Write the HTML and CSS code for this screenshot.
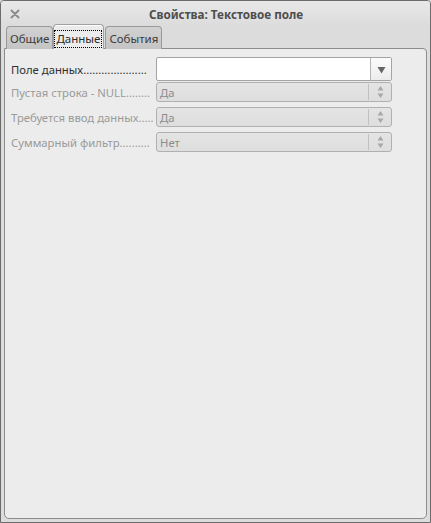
FILE: index.html
```html
<!DOCTYPE html>
<html lang="ru">
<head>
<meta charset="utf-8">
<title>Свойства: Текстовое поле</title>
<link rel="stylesheet" href="styles.css">
</head>
<body>
<div class="window">
  <div class="titlebar">
    <svg class="close" width="10" height="10" viewBox="0 0 10 10"><path d="M1.5 1.5 L8.5 8.5 M8.5 1.5 L1.5 8.5" stroke="#8c8c8c" stroke-width="2" stroke-linecap="round"/></svg>
    <span class="title">Свойства: Текстовое поле</span>
  </div>
  <div class="tabs">
    <div class="tab">Общие</div>
    <div class="tab active"><span class="focus">Данные</span></div>
    <div class="tab last">События</div>
  </div>
  <div class="panel">
    <div class="row first">
      <div class="label">Поле данных.....................</div>
      <div class="combo">
        <div class="combo-text"></div>
        <div class="combo-btn"><svg width="9" height="8" viewBox="0 0 9 8"><path d="M0.5 1 L8.5 1 L4.5 7.5 Z" fill="#666"/></svg></div>
      </div>
    </div>
    <div class="row">
      <div class="label dim">Пустая строка - NULL........</div>
      <div class="select"><span class="val">Да</span><span class="spin"><svg width="7" height="14" viewBox="0 0 7 14"><path d="M3.5 1 L6.5 5.5 L0.5 5.5 Z M0.5 8.5 L6.5 8.5 L3.5 13 Z" fill="#a8a8a8"/></svg></span></div>
    </div>
    <div class="row">
      <div class="label dim">Требуется ввод данных.....</div>
      <div class="select"><span class="val">Да</span><span class="spin"><svg width="7" height="14" viewBox="0 0 7 14"><path d="M3.5 1 L6.5 5.5 L0.5 5.5 Z M0.5 8.5 L6.5 8.5 L3.5 13 Z" fill="#a8a8a8"/></svg></span></div>
    </div>
    <div class="row">
      <div class="label dim">Суммарный фильтр..........</div>
      <div class="select"><span class="val">Нет</span><span class="spin"><svg width="7" height="14" viewBox="0 0 7 14"><path d="M3.5 1 L6.5 5.5 L0.5 5.5 Z M0.5 8.5 L6.5 8.5 L3.5 13 Z" fill="#a8a8a8"/></svg></span></div>
    </div>
  </div>
</div>
</body>
</html>
```
FILE: styles.css
```css
html, body {
  margin: 0;
  padding: 0;
  background: #dadada;
}
body {
  font-family: "Noto Sans", "Open Sans", sans-serif;
  font-size: 11.3px;
}
.window {
  box-sizing: border-box;
  width: 431px;
  height: 523px;
  border: 1px solid #6b6b6b;
  border-radius: 4px 4px 0 0;
  background: #dcdcdc;
  display: flex;
  flex-direction: column;
}
.titlebar {
  height: 24px;
  flex: none;
  display: flex;
  align-items: center;
  position: relative;
  background: linear-gradient(#e8e8e8, #dcdcdc);
  border-radius: 3px 3px 0 0;
}
.close {
  position: absolute;
  left: 9px;
  top: 8px;
}
.title {
  flex: 1;
  text-align: center;
  padding-left: 21px;
  font-weight: bold;
  color: #4e4e4e;
  font-size: 11.7px;
  margin-top: 2px;
}
.tabs {
  display: flex;
  align-items: flex-end;
  height: 24px;
  flex: none;
  padding-left: 5px;
  position: relative;
  z-index: 1;
  margin-bottom: -1px;
}
.tab {
  box-sizing: border-box;
  height: 23px;
  padding: 2px 3px 0 3px;
  border: 1px solid #9a9a9a;
  border-bottom: none;
  border-radius: 4px 4px 0 0;
  background: linear-gradient(#d2d2d2, #c4c4c4);
  color: #3c3c3c;
  display: flex;
  align-items: center;
  line-height: 16px;
  font-size: 11.5px;
}
.tab.last {
  margin-left: 1px;
}
.tab.active {
  height: 25px;
  background: #ececec;
  border-color: #a0a0a0;
  box-shadow: inset 0 1px 0 #ffffff;
  padding: 3px 2px 0 1px;
  color: #2a2a2a;
}
.focus {
  outline: 1px dotted #000;
  outline-offset: 0;
  padding: 0 1px;
}
.panel {
  flex: 1;
  margin: 0 3px 3px 3px;
  border: 1px solid #8c8c8c;
  border-radius: 0 4px 5px 5px;
  background: #ececec;
  padding: 8px 0 0 5px;
}
.row {
  display: flex;
  align-items: center;
  height: 20px;
  margin-bottom: 5px;
}
.row.first {
  height: 24px;
  margin-bottom: 1px;
}
.label {
  width: 145px;
  margin-left: 1px;
  white-space: nowrap;
  overflow: hidden;
  color: #303030;
}
.label.dim {
  color: #9a9a9a;
}
.combo {
  box-sizing: border-box;
  width: 236px;
  height: 24px;
  display: flex;
  border: 1px solid #a4a4a4;
  border-radius: 2px;
  background: #ffffff;
}
.combo-text {
  flex: 1;
}
.combo-btn {
  width: 20px;
  border-left: 1px solid #b4b4b4;
  background: linear-gradient(#fbfbfb, #ececec);
  display: flex;
  align-items: center;
  justify-content: center;
  padding-top: 1px;
}
.select {
  box-sizing: border-box;
  width: 236px;
  height: 20px;
  display: flex;
  align-items: center;
  border: 1px solid #b0b0b0;
  border-radius: 3px;
  background: linear-gradient(#e4e4e4, #dedede);
  color: #8c8c8c;
}
.val {
  flex: 1;
  padding-left: 3px;
}
.spin {
  width: 20px;
  height: 16px;
  border-left: 1px solid #c0c0c0;
  display: flex;
  align-items: center;
  justify-content: center;
  margin-right: 1px;
  padding-left: 1px;
}
```
